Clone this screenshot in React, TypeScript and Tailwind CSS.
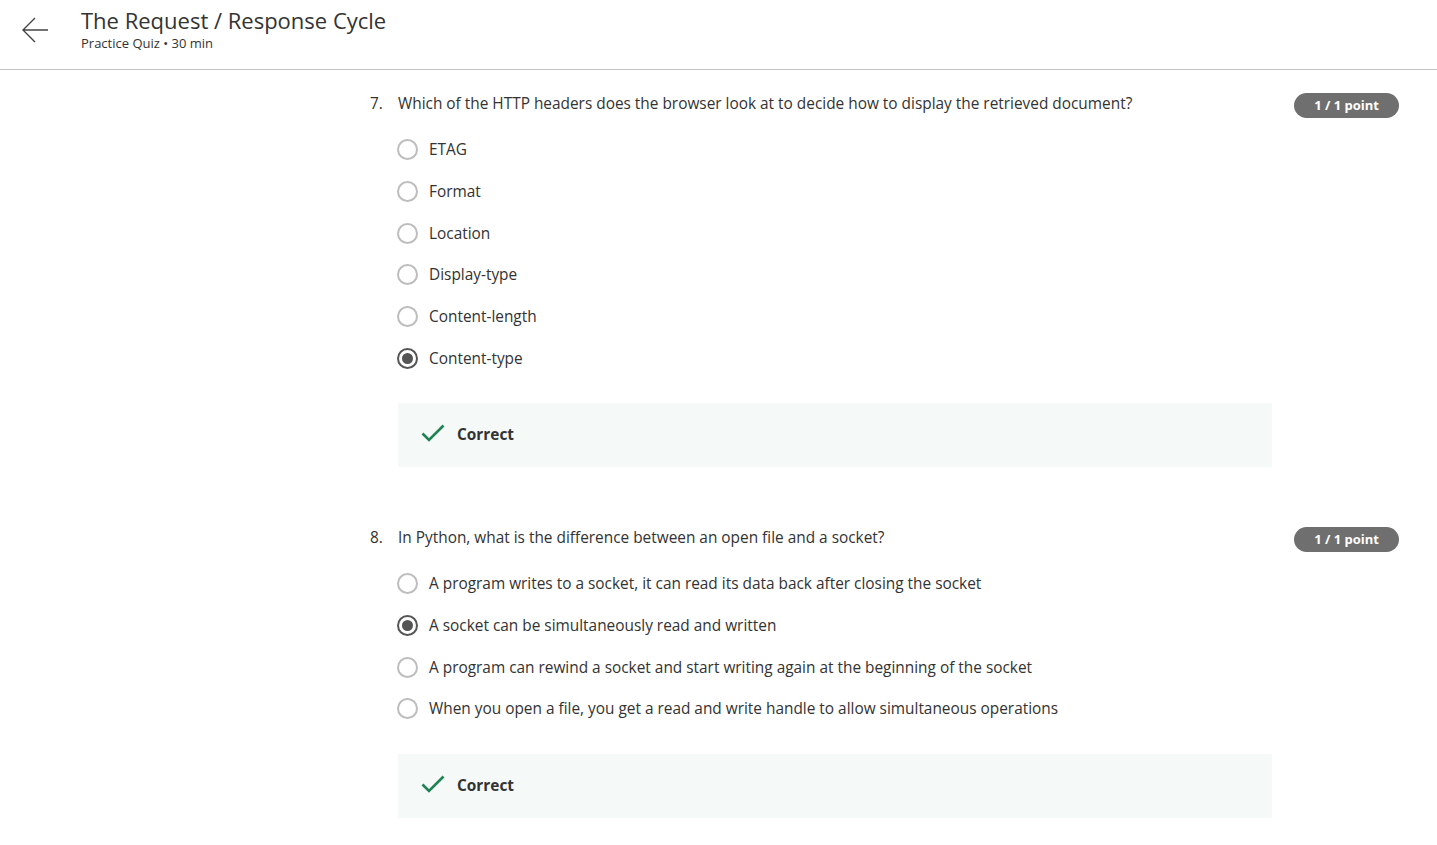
import React from 'react';

type Question = {
  num: number;
  text: string;
  options: string[];
  selected: number;
};

const questions: Question[] = [
  {
    num: 7,
    text: 'Which of the HTTP headers does the browser look at to decide how to display the retrieved document?',
    options: ['ETAG', 'Format', 'Location', 'Display-type', 'Content-length', 'Content-type'],
    selected: 5,
  },
  {
    num: 8,
    text: 'In Python, what is the difference between an open file and a socket?',
    options: [
      'A program writes to a socket, it can read its data back after closing the socket',
      'A socket can be simultaneously read and written',
      'A program can rewind a socket and start writing again at the beginning of the socket',
      'When you open a file, you get a read and write handle to allow simultaneous operations',
    ],
    selected: 1,
  },
];

const Radio: React.FC<{ checked: boolean }> = ({ checked }) =>
  checked ? (
    <span className="w-[21px] h-[21px] rounded-full border-2 border-[#555] flex items-center justify-center shrink-0">
      <span className="w-[11px] h-[11px] rounded-full bg-[#555]" />
    </span>
  ) : (
    <span className="w-[21px] h-[21px] rounded-full border-2 border-[#bdbdbd] shrink-0" />
  );

const QuestionBlock: React.FC<{ q: Question }> = ({ q }) => (
  <div className="flex flex-col">
    <div className="flex items-start">
      <span className="w-[28px] text-[15.4px] leading-[24px] text-[#333]">{q.num}.</span>
      <p className="flex-1 text-[15.4px] leading-[24px] text-[#333]">{q.text}</p>
      <span className="ml-4 mt-[1px] h-[25px] px-[20px] rounded-full bg-[#6f6f6f] text-white text-[13px] font-bold flex items-center">
        1 / 1 point
      </span>
    </div>
    <div className="mt-[11px] ml-[27px] flex flex-col">
      {q.options.map((opt, i) => (
        <label key={i} className="h-[41.67px] flex items-center gap-[11px]">
          <Radio checked={i === q.selected} />
          <span className="text-[15.4px] text-[#333]">{opt}</span>
        </label>
      ))}
    </div>
    <div className="mt-[24px] ml-[28px] w-[874px] h-[64px] bg-[#f5f9f8] flex items-center pl-[23px]">
      <svg width="24" height="20" viewBox="0 0 24 20" fill="none" className="mt-[-4px]">
        <polyline points="1.5,10.5 8,17 22.5,2.5" stroke="#1f8354" strokeWidth="2.6" fill="none" />
      </svg>
      <span className="ml-[12px] text-[15.4px] font-bold text-[#333]">Correct</span>
    </div>
  </div>
);

const App: React.FC = () => {
  return (
    <div className="min-h-screen bg-white font-['Open_Sans',sans-serif]">
      <header className="h-[70px] border-b border-[#c4c4c4] flex">
        <div className="w-[81px] flex items-start justify-center pt-[16px] pr-[12px]">
          <svg width="28" height="28" viewBox="0 0 28 28" fill="none">
            <path d="M27 14H2M14 2L2 14L14 26" stroke="#444" strokeWidth="1.4" />
          </svg>
        </div>
        <div className="flex flex-col pt-[5px]">
          <h1 className="text-[22px] leading-[30px] text-[#333]">The Request / Response Cycle</h1>
          <p className="text-[13px] leading-[16px] text-[#333]">Practice Quiz • 30 min</p>
        </div>
      </header>
      <main className="pl-[370px] pr-[38px] pt-[22px] flex flex-col gap-[59px]">
        {questions.map((q) => (
          <QuestionBlock key={q.num} q={q} />
        ))}
      </main>
    </div>
  );
};

export default App;
